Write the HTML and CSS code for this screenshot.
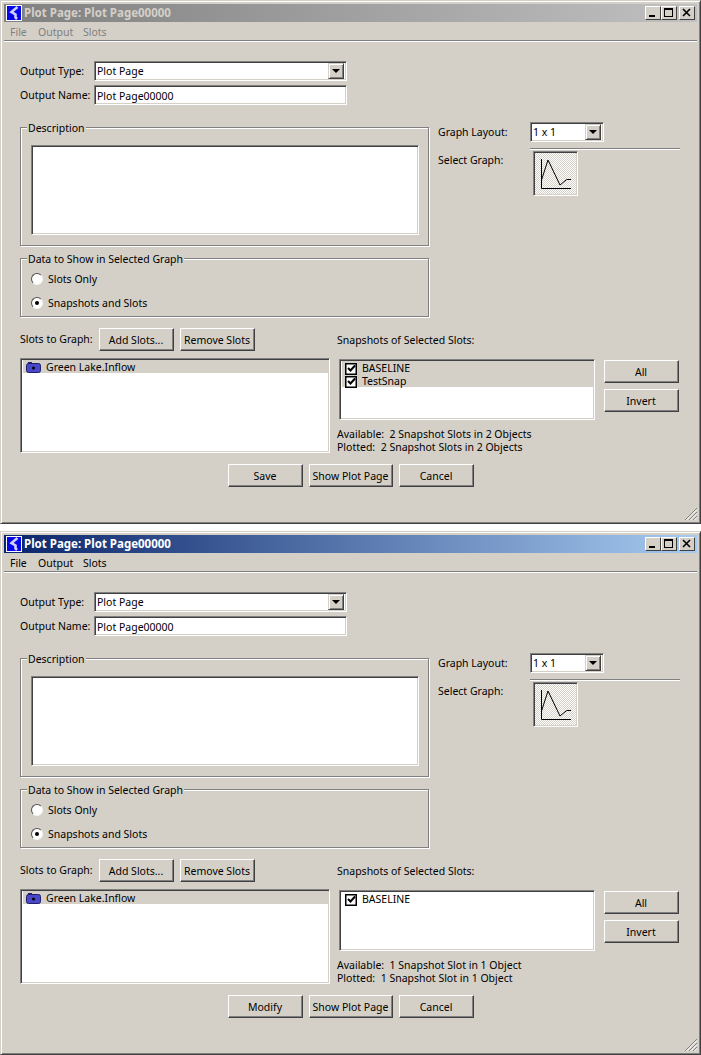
FILE: index.html
```html
<!DOCTYPE html>
<html lang="en">
<head>
<meta charset="utf-8">
<title>Plot Page</title>
<link rel="stylesheet" href="styles.css">
</head>
<body>
<section class="window inactive">
  <header class="titlebar">
    <svg class="logo" viewBox="0 0 16 16"><rect x=".5" y=".5" width="15" height="15" fill="#0606ea" stroke="#fff"/><path d="M11.500 2 L5.500 7 L9.500 9.500 L9.500 12.500 L11 14" fill="none" stroke="#d0d0ff" stroke-width="2.600"/></svg>
    <span class="title-text">Plot Page: Plot Page00000</span>
    <div class="controls">
      <span class="ctl"><svg viewBox="0 0 16 14"><rect x="4" y="9" width="6" height="2" fill="#000"/></svg></span>
      <span class="ctl"><svg viewBox="0 0 16 14"><path d="M3 2H12V11H3Z M4 4V10H11V4Z" fill="#000" fill-rule="evenodd"/></svg></span>
      <span class="ctl ctl-close"><svg viewBox="0 0 16 14"><path d="M4 3L11 10M11 3L4 10" stroke="#000" stroke-width="1.6" fill="none"/></svg></span>
    </div>
  </header>
  <nav class="menubar"><span class="m-file">File</span><span class="m-output">Output</span><span class="m-slots">Slots</span></nav>
  <main class="content">
    <div class="top">
      <div class="top-left">
        <div class="form-row"><span class="form-label">Output Type:</span><div class="combo combo-wide"><span class="combo-text">Plot Page</span><span class="arrow"><i></i></span></div></div>
        <div class="form-row form-row-2"><span class="form-label">Output Name:</span><div class="textbox">Plot Page00000</div></div>
        <div class="group group-desc"><span class="legend">Description</span><div class="textarea"></div></div>
        <div class="group group-data"><span class="legend">Data to Show in Selected Graph</span>
          <div class="radio-row"><span class="radio"></span>Slots Only</div>
          <div class="radio-row radio-row-2"><span class="radio on"></span>Snapshots and Slots</div>
        </div>
      </div>
      <div class="top-right">
        <div class="layout-row"><span class="layout-label">Graph Layout:</span><div class="combo combo-small"><span class="combo-text">1 x 1</span><span class="arrow"><i></i></span></div></div>
        <div class="etched"></div>
        <div class="select-row"><span class="select-label">Select Graph:</span>
          <div class="graph-btn"><svg viewBox="0 0 43 43"><path d="M7.500 7V36.500H37" fill="none" stroke="#000"/><path d="M7.500 28L14 8L26 33L32.700 27.500H37" fill="none" stroke="#000"/></svg></div>
        </div>
      </div>
    </div>
    <div class="mid">
      <div class="slots-col">
        <div class="slots-bar"><span class="slots-label">Slots to Graph:</span><button class="btn btn-slot">Add Slots...</button><button class="btn btn-slot">Remove Slots</button></div>
        <div class="list slot-list"><div class="row row-sel"><svg class="camera" viewBox="0 0 15 11"><rect x=".5" y="1.500" width="14" height="9" rx="2" fill="#4848c8" stroke="#20206a"/><rect x="2" y="0" width="4" height="2" fill="#20206a"/><circle cx="7.500" cy="6" r="1.500" fill="#000"/></svg>Green Lake.Inflow</div></div>
      </div>
      <div class="snap-col">
        <div class="snap-head">Snapshots of Selected Slots:</div>
        <div class="snap-main">
          <div class="list snap-list">
            <div class="snap-row row-sel"><span class="check"><svg viewBox="0 0 9 9"><path d="M1 4L3.500 6.500L8 1.500" fill="none" stroke="#000" stroke-width="2"/></svg></span>BASELINE</div>
            <div class="snap-row row-sel"><span class="check"><svg viewBox="0 0 9 9"><path d="M1 4L3.500 6.500L8 1.500" fill="none" stroke="#000" stroke-width="2"/></svg></span>TestSnap</div>
          </div>
          <div class="snap-btns"><button class="btn">All</button><button class="btn">Invert</button></div>
        </div>
        <div class="stats"><div>Available:&nbsp; 2 Snapshot Slots in 2 Objects</div><div>Plotted:&nbsp; 2 Snapshot Slots in 2 Objects</div></div>
      </div>
    </div>
    <div class="actions"><button class="btn">Save</button><button class="btn btn-show">Show Plot Page</button><button class="btn">Cancel</button></div>
  </main>
  <svg class="grip" viewBox="0 0 14 14"><path d="M13 1L1 13M13 5L5 13M13 9L9 13" stroke="#808080" fill="none"/><path d="M13 2.500L2.500 13M13 6.500L6.500 13M13 10.500L10.500 13" stroke="#fff" fill="none"/></svg>
</section>

<section class="window active">
  <header class="titlebar">
    <svg class="logo" viewBox="0 0 16 16"><rect x=".5" y=".5" width="15" height="15" fill="#0606ea" stroke="#fff"/><path d="M11.500 2 L5.500 7 L9.500 9.500 L9.500 12.500 L11 14" fill="none" stroke="#d0d0ff" stroke-width="2.600"/></svg>
    <span class="title-text">Plot Page: Plot Page00000</span>
    <div class="controls">
      <span class="ctl"><svg viewBox="0 0 16 14"><rect x="4" y="9" width="6" height="2" fill="#000"/></svg></span>
      <span class="ctl"><svg viewBox="0 0 16 14"><path d="M3 2H12V11H3Z M4 4V10H11V4Z" fill="#000" fill-rule="evenodd"/></svg></span>
      <span class="ctl ctl-close"><svg viewBox="0 0 16 14"><path d="M4 3L11 10M11 3L4 10" stroke="#000" stroke-width="1.6" fill="none"/></svg></span>
    </div>
  </header>
  <nav class="menubar"><span class="m-file">File</span><span class="m-output">Output</span><span class="m-slots">Slots</span></nav>
  <main class="content">
    <div class="top">
      <div class="top-left">
        <div class="form-row"><span class="form-label">Output Type:</span><div class="combo combo-wide"><span class="combo-text">Plot Page</span><span class="arrow"><i></i></span></div></div>
        <div class="form-row form-row-2"><span class="form-label">Output Name:</span><div class="textbox">Plot Page00000</div></div>
        <div class="group group-desc"><span class="legend">Description</span><div class="textarea"></div></div>
        <div class="group group-data"><span class="legend">Data to Show in Selected Graph</span>
          <div class="radio-row"><span class="radio"></span>Slots Only</div>
          <div class="radio-row radio-row-2"><span class="radio on"></span>Snapshots and Slots</div>
        </div>
      </div>
      <div class="top-right">
        <div class="layout-row"><span class="layout-label">Graph Layout:</span><div class="combo combo-small"><span class="combo-text">1 x 1</span><span class="arrow"><i></i></span></div></div>
        <div class="etched"></div>
        <div class="select-row"><span class="select-label">Select Graph:</span>
          <div class="graph-btn"><svg viewBox="0 0 43 43"><path d="M7.500 7V36.500H37" fill="none" stroke="#000"/><path d="M7.500 28L14 8L26 33L32.700 27.500H37" fill="none" stroke="#000"/></svg></div>
        </div>
      </div>
    </div>
    <div class="mid">
      <div class="slots-col">
        <div class="slots-bar"><span class="slots-label">Slots to Graph:</span><button class="btn btn-slot">Add Slots...</button><button class="btn btn-slot">Remove Slots</button></div>
        <div class="list slot-list"><div class="row row-sel"><svg class="camera" viewBox="0 0 15 11"><rect x=".5" y="1.500" width="14" height="9" rx="2" fill="#4848c8" stroke="#20206a"/><rect x="2" y="0" width="4" height="2" fill="#20206a"/><circle cx="7.500" cy="6" r="1.500" fill="#000"/></svg>Green Lake.Inflow</div></div>
      </div>
      <div class="snap-col">
        <div class="snap-head">Snapshots of Selected Slots:</div>
        <div class="snap-main">
          <div class="list snap-list">
            <div class="snap-row"><span class="check"><svg viewBox="0 0 9 9"><path d="M1 4L3.500 6.500L8 1.500" fill="none" stroke="#000" stroke-width="2"/></svg></span>BASELINE</div>
          </div>
          <div class="snap-btns"><button class="btn">All</button><button class="btn">Invert</button></div>
        </div>
        <div class="stats"><div>Available:&nbsp; 1 Snapshot Slot in 1 Object</div><div>Plotted:&nbsp; 1 Snapshot Slot in 1 Object</div></div>
      </div>
    </div>
    <div class="actions"><button class="btn">Modify</button><button class="btn btn-show">Show Plot Page</button><button class="btn">Cancel</button></div>
  </main>
  <svg class="grip" viewBox="0 0 14 14"><path d="M13 1L1 13M13 5L5 13M13 9L9 13" stroke="#808080" fill="none"/><path d="M13 2.500L2.500 13M13 6.500L6.500 13M13 10.500L10.500 13" stroke="#fff" fill="none"/></svg>
</section>
</body>
</html>
```
FILE: styles.css
```css
* { box-sizing: border-box; }
html, body { margin: 0; padding: 0; background: #fff; }
body {
  width: 701px;
  height: 1055px;
  overflow: hidden;
  font: 10.500px/13px "Noto Sans", sans-serif;
  color: #000;
}
.window {
  position: relative;
  width: 701px;
  height: 524px;
  padding: 3px;
  background: #d4d0c8;
  border: 1px solid;
  border-color: #d4d0c8 #404040 #404040 #d4d0c8;
  box-shadow: inset 1px 1px 0 #fff, inset -1px -1px 0 #808080;
}
.window.active { margin-top: 7px; }

.titlebar {
  height: 18px;
  display: flex;
  align-items: center;
  padding: 0 2px;
  color: #fff;
}
.inactive .titlebar { background: linear-gradient(90deg, #808080, #c0c0c0); color: #d4d0c8; }
.active .titlebar { background: linear-gradient(90deg, #0a246a, #a6caf0); }
.logo { width: 16px; height: 16px; flex: none; }
.title-text { margin-left: 2px; font: bold 11.500px/18px "Noto Sans", sans-serif; }
.controls { margin-left: auto; display: flex; }
.ctl {
  width: 16px;
  height: 14px;
  background: #d4d0c8;
  border: 1px solid;
  border-color: #fff #404040 #404040 #fff;
  display: block;
}
.ctl svg { display: block; width: 16px; height: 14px; margin: -1px; }
.ctl-close { margin-left: 2px; }

.menubar {
  height: 20px;
  display: flex;
  padding: 4px 0 0 6px;
  border-bottom: 1px solid #fff;
  box-shadow: inset 0 -1px 0 #808080;
}
.inactive .menubar { color: #808080; }
.m-file { width: 28px; }
.m-output { width: 45px; }

.content { padding: 19px 0 0 16px; }
.top { display: flex; gap: 8px; }
.top-left { width: 410px; }
.top-right { width: 242px; padding-top: 61px; }

.form-row { display: flex; align-items: center; height: 20px; }
.form-row-2 { margin-top: 4px; }
.form-label { width: 74px; }

.combo, .textbox, .textarea, .list {
  background: #fff;
  border: 1px solid;
  border-color: #808080 #fff #fff #808080;
  box-shadow: inset 1px 1px 0 #404040, inset -1px -1px 0 #d4d0c8;
}
.combo {
  height: 20px;
  display: flex;
  align-items: center;
  padding: 0 2px;
}
.combo-wide { width: 253px; }
.combo-small { width: 74px; }
.combo-text { flex: 1; }
.arrow {
  width: 16px;
  height: 16px;
  background: #d4d0c8;
  border: 1px solid;
  border-color: #d4d0c8 #404040 #404040 #d4d0c8;
  box-shadow: inset 1px 1px 0 #fff, inset -1px -1px 0 #808080;
  display: flex;
  align-items: center;
  justify-content: center;
}
.arrow i {
  width: 0;
  height: 0;
  border-left: 4px solid transparent;
  border-right: 4px solid transparent;
  border-top: 4px solid #000;
}
.textbox { width: 253px; height: 20px; padding: 4px 0 0 2px; }

.group {
  position: relative;
  width: 409px;
  border: 1px solid #808080;
  box-shadow: 1px 1px 0 #fff, inset 1px 1px 0 #fff;
}
.legend {
  position: absolute;
  top: -6px;
  left: 6px;
  padding: 0 1px;
  background: #d4d0c8;
}
.group-desc { margin-top: 22px; height: 119px; }
.textarea { width: 388px; height: 90px; margin: 17px 0 0 10px; }
.group-data { margin-top: 12px; height: 59px; }
.radio-row { display: flex; align-items: center; height: 14px; margin: 13px 0 0 10px; }
.radio-row-2 { margin-top: 10px; }
.radio {
  width: 12px;
  height: 12px;
  margin-right: 5px;
  border-radius: 50%;
  background: #fff;
  border: 1px solid;
  border-color: #505050 #f4f4f0 #f4f4f0 #505050;
  display: flex;
  align-items: center;
  justify-content: center;
}
.radio.on::after { content: ""; width: 4px; height: 4px; border-radius: 50%; background: #000; }

.etched {
  width: 150px;
  height: 2px;
  margin: 6px 0 0 92px;
  border-top: 1px solid #808080;
  border-bottom: 1px solid #fff;
}
.layout-row { display: flex; align-items: center; }
.layout-label { width: 92px; }
.select-row { display: flex; margin-top: 1px; }
.select-label { width: 95px; line-height: 18px; }
.graph-btn {
  width: 45px;
  height: 45px;
  background: repeating-conic-gradient(#fff 0 25%, #d4d0c8 0 50%) 0 0 / 2px 2px;
  border: 1px solid;
  border-color: #808080 #fff #fff #808080;
  box-shadow: inset 1px 1px 0 #404040, inset -1px -1px 0 #d4d0c8;
}
.graph-btn svg { display: block; width: 43px; height: 43px; }

.btn {
  display: block;
  width: 75px;
  height: 23px;
  padding: 1px 1px 0 0;
  font: inherit;
  color: #000;
  background: #d4d0c8;
  border: 1px solid;
  border-color: #fff #404040 #404040 #fff;
  box-shadow: inset -1px -1px 0 #808080;
}
.mid { display: flex; margin-top: 11px; }
.slots-col { width: 310px; }
.slots-bar { display: flex; align-items: center; height: 23px; }
.slots-label { width: 79px; }
.btn-slot { margin-right: 6px; }
.list { overflow: hidden; }
.slot-list { height: 95px; margin-top: 7px; padding: 1px 1px 2px 2px; }
.row { display: flex; align-items: center; height: 13px; padding-top: 2px; }
.row-sel { background: #d4d0c8; }
.camera { width: 15px; height: 11px; margin: 0 5px 0 3px; }

.snap-col { margin-left: 7px; }
.snap-head { height: 23px; padding-top: 6px; }
.snap-main { display: flex; margin-top: 8px; margin-left: 2px; }
.snap-list { width: 256px; height: 61px; padding: 1px 1px 2px 2px; }
.snap-row { display: flex; align-items: center; height: 13px; padding: 2px 0 0 3px; }
.check {
  flex: none;
  width: 12px;
  height: 12px;
  margin-right: 5px;
  border: 1px solid #000;
  background: #fff;
  box-shadow: inset 0 0 0 .5px #000;
  display: flex;
  align-items: center;
  justify-content: center;
}
.check svg { width: 9px; height: 9px; }
.snap-btns { margin: 1px 0 0 9px; }
.snap-btns .btn + .btn { margin-top: 6px; }
.stats { margin-top: 8px; }

.actions { display: flex; gap: 6px; margin: 10px 0 0 208px; }
.btn-show { width: 84px; }

.grip { position: absolute; right: 2px; bottom: 2px; width: 14px; height: 14px; }
```
